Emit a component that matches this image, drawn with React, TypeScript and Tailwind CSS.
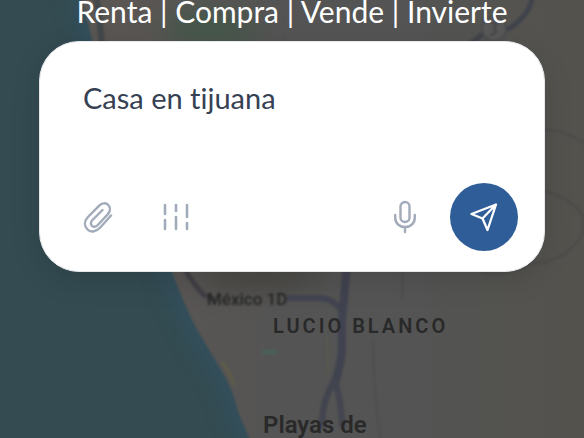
import { useState } from 'react'

function MapBackground() {
  return (
    <svg
      className="absolute inset-0 w-full h-full"
      viewBox="0 0 584 438"
      preserveAspectRatio="xMidYMid slice"
      aria-hidden="true"
    >
      <defs>
        <linearGradient id="land" x1="0" y1="0" x2="1" y2="0">
          <stop offset="0.25" stopColor="#5a5654" />
          <stop offset="0.5" stopColor="#545454" />
          <stop offset="0.72" stopColor="#535453" />
          <stop offset="1" stopColor="#54524d" />
        </linearGradient>
        <filter id="soft" x="-20%" y="-20%" width="140%" height="140%" colorInterpolationFilters="sRGB">
          <feGaussianBlur stdDeviation="1" />
        </filter>
        <filter id="haze" x="-50%" y="-50%" width="200%" height="200%" colorInterpolationFilters="sRGB">
          <feGaussianBlur stdDeviation="12" />
        </filter>
        <filter id="shore" x="-20%" y="-20%" width="140%" height="140%" colorInterpolationFilters="sRGB">
          <feGaussianBlur stdDeviation="9" />
        </filter>
        <clipPath id="sea">
          <path d="M-5 -5H80C88 20 96 60 112 110L145 200L172 272C180 295 188 312 196 328L218 365C230 385 235 398 238 412L252 445H-5Z" />
        </clipPath>
      </defs>

      <rect width="584" height="438" fill="url(#land)" />

      {/* Terrain tints */}
      <g filter="url(#haze)">
        <ellipse cx="210" cy="28" rx="50" ry="18" fill="#45574a" />
        <ellipse cx="260" cy="278" rx="60" ry="12" fill="#484742" />
      </g>

      {/* Coast */}
      <g filter="url(#soft)">
        <g clipPath="url(#sea)">
          <rect x="-5" y="-5" width="300" height="450" fill="#334b51" />
          <path d="M80 -5C88 20 96 60 112 110L145 200L172 272C180 295 188 312 196 328L218 365C230 385 235 398 238 412L252 445" stroke="#334f5d" strokeWidth="22" fill="none" filter="url(#shore)" />
        </g>
        <path d="M222 362Q230 373 235 386" stroke="#5f5c49" strokeWidth="3" fill="none" />
        <path d="M262 352h14" stroke="#4a6058" strokeWidth="5" fill="none" />
      </g>

      {/* Roads */}
      <g filter="url(#soft)" fill="none" strokeLinecap="round">
        <path d="M96 -5Q100 20 102 45" stroke="#42474a" strokeWidth="6" />
        <path d="M184 268Q194 285 204 295L214 299" stroke="#413f44" strokeWidth="5" />
        <path d="M290 298H320Q334 299 342 311" stroke="#424451" strokeWidth="6" />
        <path d="M347 265L342 320L342 350Q341 365 334 386" stroke="#40424f" strokeWidth="8" />
        <path d="M335 380Q322 400 322 425" stroke="#42444f" strokeWidth="6" />
        <path d="M336 385Q341 400 342 425" stroke="#43454f" strokeWidth="6" />
        <path d="M327 335L328 372" stroke="#5a5a4d" strokeWidth="2" />
        <path d="M373 340Q373 390 381 445M402 270V300" stroke="#4a4b4c" strokeWidth="1" />
        <path d="M533 -5Q530 15 510 28L500 31M484 33L468 46" stroke="#40434b" strokeWidth="5" />
        <circle cx="494" cy="29" r="12" fill="#585858" stroke="#4a4c4e" strokeWidth="2" />
        <path d="M491 23h6l-3 5q5 4-3 7" stroke="#454648" strokeWidth="2" />
        <path d="M540 130Q566 128 590 148M540 190Q573 197 583 217Q589 237 563 255Q545 264 530 264Q500 281 472 268" stroke="#4b4b4a" strokeWidth="2" />
      </g>

      {/* Place names */}
      <g filter="url(#soft)" fontFamily="Roboto, sans-serif">
        <text x="207" y="305" fontSize="17" fontWeight="500" fill="#262626">México 1D</text>
      </g>
      <g fontFamily="Roboto, sans-serif" fill="#292929">
        <text x="273" y="333" fontSize="20" fontWeight="600" letterSpacing="3">LUCIO BLANCO</text>
        <text x="263" y="433" fontSize="24" fontWeight="600">Playas de</text>
      </g>
    </svg>
  )
}

function ClipIcon() {
  return (
    <svg width="32" height="32" viewBox="1 0 32 32" fill="none" stroke="currentColor" strokeWidth="2.4" strokeLinecap="round" strokeLinejoin="round">
      <path d="M29 14.5L18.5 26.2C14.5 30.5 9 32 5.5 28.5C2 25 2.2 20 6 16L17 4.8C20 1.8 24 1.5 26.3 4C28.6 6.6 28.4 10.5 25.7 13.4L15.8 24C13.8 26 11.5 26.2 10 24.8C8.4 23.2 8.6 21 10.5 19L20.5 9" />
    </svg>
  )
}

function FiltersIcon() {
  return (
    <svg width="28" height="30" viewBox="1 0 28 30" fill="none" stroke="currentColor" strokeWidth="2.6" strokeLinecap="round">
      <path d="M3 3V12M3 18V27M14 3V9M14 15V27M25 3V15M25 21V27" />
    </svg>
  )
}

function MicIcon() {
  return (
    <svg width="24" height="34" viewBox="1 0 24 34" fill="none" stroke="currentColor" strokeWidth="2.4" strokeLinecap="round">
      <rect x="7.5" y="2" width="9" height="20" rx="4.5" />
      <path d="M2.2 15V17.5C2.2 23.5 6.5 27 12 27S21.8 23.5 21.8 17.5V15M12 27V32" />
    </svg>
  )
}

function SendIcon() {
  return (
    <svg width="30" height="30" viewBox="0 0 30 30" fill="none" stroke="currentColor" strokeWidth="2.3" strokeLinecap="round" strokeLinejoin="round">
      <path d="M27 2.5L2.5 12L13.5 16.5L18.5 28ZM27 2.5L13.5 16.5" />
    </svg>
  )
}

export default function App() {
  const [query, setQuery] = useState('Casa en tijuana')

  return (
    <main className="relative min-h-screen overflow-hidden bg-[#545454] font-['Lato',sans-serif] [font-variant-ligatures:none]">
      <MapBackground />

      <div className="relative px-[39px]">
        <h1 className="text-center text-[30px] leading-[22px] text-white whitespace-nowrap">
          Renta | Compra | Vende | Invierte
        </h1>

        {/* Search box */}
        <form
          onSubmit={(e) => e.preventDefault()}
          className="mt-[19px] rounded-[40px] border border-gray-200 bg-white pt-10 pb-5 pl-[43px] pr-[26px] shadow-[0_8px_30px_rgba(0,0,0,0.12)]"
        >
          <textarea
            aria-label="Buscar propiedades"
            rows={2}
            value={query}
            onChange={(e) => setQuery(e.target.value)}
            className="block w-full h-[101px] resize-none bg-transparent text-[29px] leading-8 text-gray-700 focus:outline-none"
          />
          <div className="flex items-center justify-between text-[#a1abb9]">
            <div className="flex items-center gap-12">
              <button type="button" aria-label="Adjuntar archivo">
                <ClipIcon />
              </button>
              <button type="button" aria-label="Filtros">
                <FiltersIcon />
              </button>
            </div>
            <div className="flex items-center gap-8">
              <button type="button" aria-label="Dictar">
                <MicIcon />
              </button>
              <button
                type="submit"
                aria-label="Enviar"
                className="flex h-[68px] w-[68px] items-center justify-center rounded-full bg-[#2f5d98] text-white"
              >
                <SendIcon />
              </button>
            </div>
          </div>
        </form>
      </div>
    </main>
  )
}
